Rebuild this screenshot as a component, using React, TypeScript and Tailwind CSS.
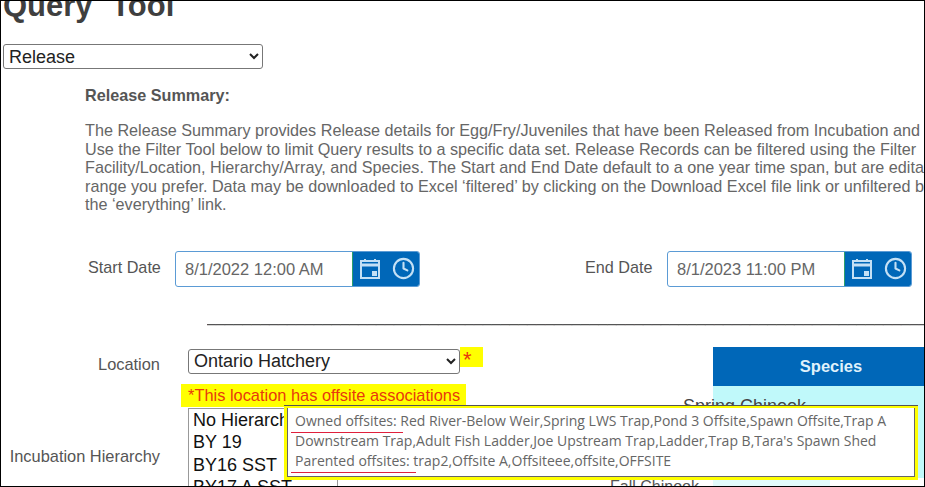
import { Clock } from "lucide-react";

const summaryLines = [
  "The Release Summary provides Release details for Egg/Fry/Juveniles that have been Released from Incubation and",
  "Use the Filter Tool below to limit Query results to a specific data set. Release Records can be filtered using the Filter",
  "Facility/Location, Hierarchy/Array, and Species. The Start and End Date default to a one year time span, but are editable",
  "range you prefer. Data may be downloaded to Excel ‘filtered’ by clicking on the Download Excel file link or unfiltered by",
  "the ‘everything’ link.",
];

function DateField({ value }: { value: string }) {
  return (
    <div className="flex h-[36px] w-[245px] overflow-hidden rounded-[3px] border border-[#5b9bd5]">
      <div className="flex flex-1 items-center border-r border-[#2e9e6b] pl-[9px] text-[16.5px] text-[#666]">{value}</div>
      <div className="flex w-[66px] items-center justify-center gap-[11px] bg-[#0067b8] pl-[1px] text-[#c4e0f5]">
        <svg viewBox="0 0 22 22" className="h-[22px] w-[22px]" fill="none" stroke="currentColor" strokeWidth="2">
          <rect x="2" y="3" width="18" height="17" />
          <path d="M2 7h18" strokeWidth="3" />
          <path d="M6 1v3M16 1v3" />
          <rect x="13" y="13" width="5" height="5" fill="currentColor" stroke="none" />
        </svg>
        <Clock size={23} strokeWidth={2.2} />
      </div>
    </div>
  );
}

function MarkedLabel({ children }: { children: string }) {
  return (
    <span className="relative">
      {children}
      <span className="absolute top-[21px] right-[-6px] left-[-4px] h-[1px] bg-[#e0203c]" />
    </span>
  );
}

export default function App() {
  return (
    <div className="relative h-[487px] w-[925px] overflow-hidden border border-black bg-white font-['Liberation_Sans',Arial,sans-serif] text-[#555]">
      <h1 className="mt-[-13px] ml-[2px] text-[31px] leading-[36px] font-bold whitespace-nowrap text-[#3f3f3f] [word-spacing:10px]">
        Query Tool
      </h1>

      <select className="mt-[20px] ml-[2px] block h-[25px] w-[260px] rounded-[3px] border border-[#777] bg-white pl-[1px] text-[18px] text-[#222]">
        <option>Release</option>
      </select>

      <div className="mt-[17px] ml-[84px] text-[16.2px] leading-[18px] font-bold">Release Summary:</div>
      <div className="mt-[17px] ml-[84px] text-[16.2px] leading-[18.6px] whitespace-nowrap text-[#666]">
        {summaryLines.map((line) => (
          <div key={line}>{line}</div>
        ))}
      </div>

      <div className="mt-[37px] flex items-center">
        <label className="mt-[-3px] ml-[87px] w-[87px] text-[16.2px] whitespace-nowrap">Start Date</label>
        <DateField value="8/1/2022 12:00 AM" />
        <label className="mt-[-3px] ml-[165px] w-[82px] text-[16.2px] whitespace-nowrap">End Date</label>
        <DateField value="8/1/2023 11:00 PM" />
      </div>

      <div className="mt-[20px] ml-[206px] overflow-hidden text-[16px] leading-[20px] whitespace-nowrap text-[#555]">
        {"_".repeat(90)}
      </div>

      <div className="mt-[20px] flex">
        <div className="flex w-[187px] shrink-0 flex-col items-end pt-[8px] pr-[28px] text-[16.4px]">
          <label className="leading-[18px]">Location</label>
          <label className="mt-[74px] leading-[18px] whitespace-nowrap">Incubation Hierarchy</label>
        </div>
        <div className="w-[525px] shrink-0">
          <div className="flex items-start">
            <select className="mt-[2px] h-[25px] w-[272px] rounded-[3px] border border-[#777] bg-white pl-[1px] text-[18px] text-[#222]">
              <option>Ontario Hatchery</option>
            </select>
            <span className="h-[20px] w-[23px] bg-[#ffff00] pl-[3px] text-[22px] leading-[26px] text-[#e8380d]">*</span>
          </div>
          <div className="mt-[10px] ml-[-7px] h-[23px] w-[285px] bg-[#ffff00] pl-[7px] text-[16.4px] leading-[23px] whitespace-nowrap text-[#e8380d]">
            *This location has offsite associations
          </div>
          <div className="mt-[1px] h-[90px] w-[150px] overflow-hidden border border-[#999] pl-[4px] text-[18px] leading-[22.5px] text-[#111]">
            <div>No Hierarchy</div>
            <div>BY 19</div>
            <div>BY16 SST</div>
            <div>BY17 A SST</div>
          </div>
        </div>
        <div className="w-[236px] shrink-0">
          <div className="flex h-[39px] items-center justify-center bg-[#0067b8] text-[16.5px] font-bold text-[#dff1fb]">Species</div>
          <div className="h-[92px] bg-[#c0f9fa] pt-[10px]">
            <div className="ml-[-30px] text-[18px] leading-[21px] whitespace-nowrap text-[#444]">Spring Chinook</div>
          </div>
          <div className="flex">
            <div className="ml-[-103px] w-[103px] text-[16px] leading-[18px] whitespace-nowrap text-[#555]">Fall Chinook</div>
            <div className="h-[10px] w-[117px] bg-[#e2fbfb]" />
          </div>
        </div>
      </div>

      {/* tooltip sits over the hierarchy list and the species panel */}
      <div className="absolute top-[404px] left-[283px] w-[634px] border-t border-[#555]">
        <div className="border-[3px] border-t-[2px] border-[#ffff00]">
          <div className="h-[69px] border border-t-0 border-[#666] bg-white pt-[3px] pl-[7px] font-['Open_Sans',sans-serif] text-[14px] leading-[20px] whitespace-nowrap text-[#666]">
            <div>
              <MarkedLabel>Owned offsites:</MarkedLabel> Red River-Below Weir,Spring LWS Trap,Pond 3 Offsite,Spawn Offsite,Trap A
            </div>
            <div>Downstream Trap,Adult Fish Ladder,Joe Upstream Trap,Ladder,Trap B,Tara's Spawn Shed</div>
            <div>
              <MarkedLabel>Parented offsites:</MarkedLabel> trap2,Offsite A,Offsiteee,offsite,OFFSITE
            </div>
          </div>
        </div>
      </div>
    </div>
  );
}
